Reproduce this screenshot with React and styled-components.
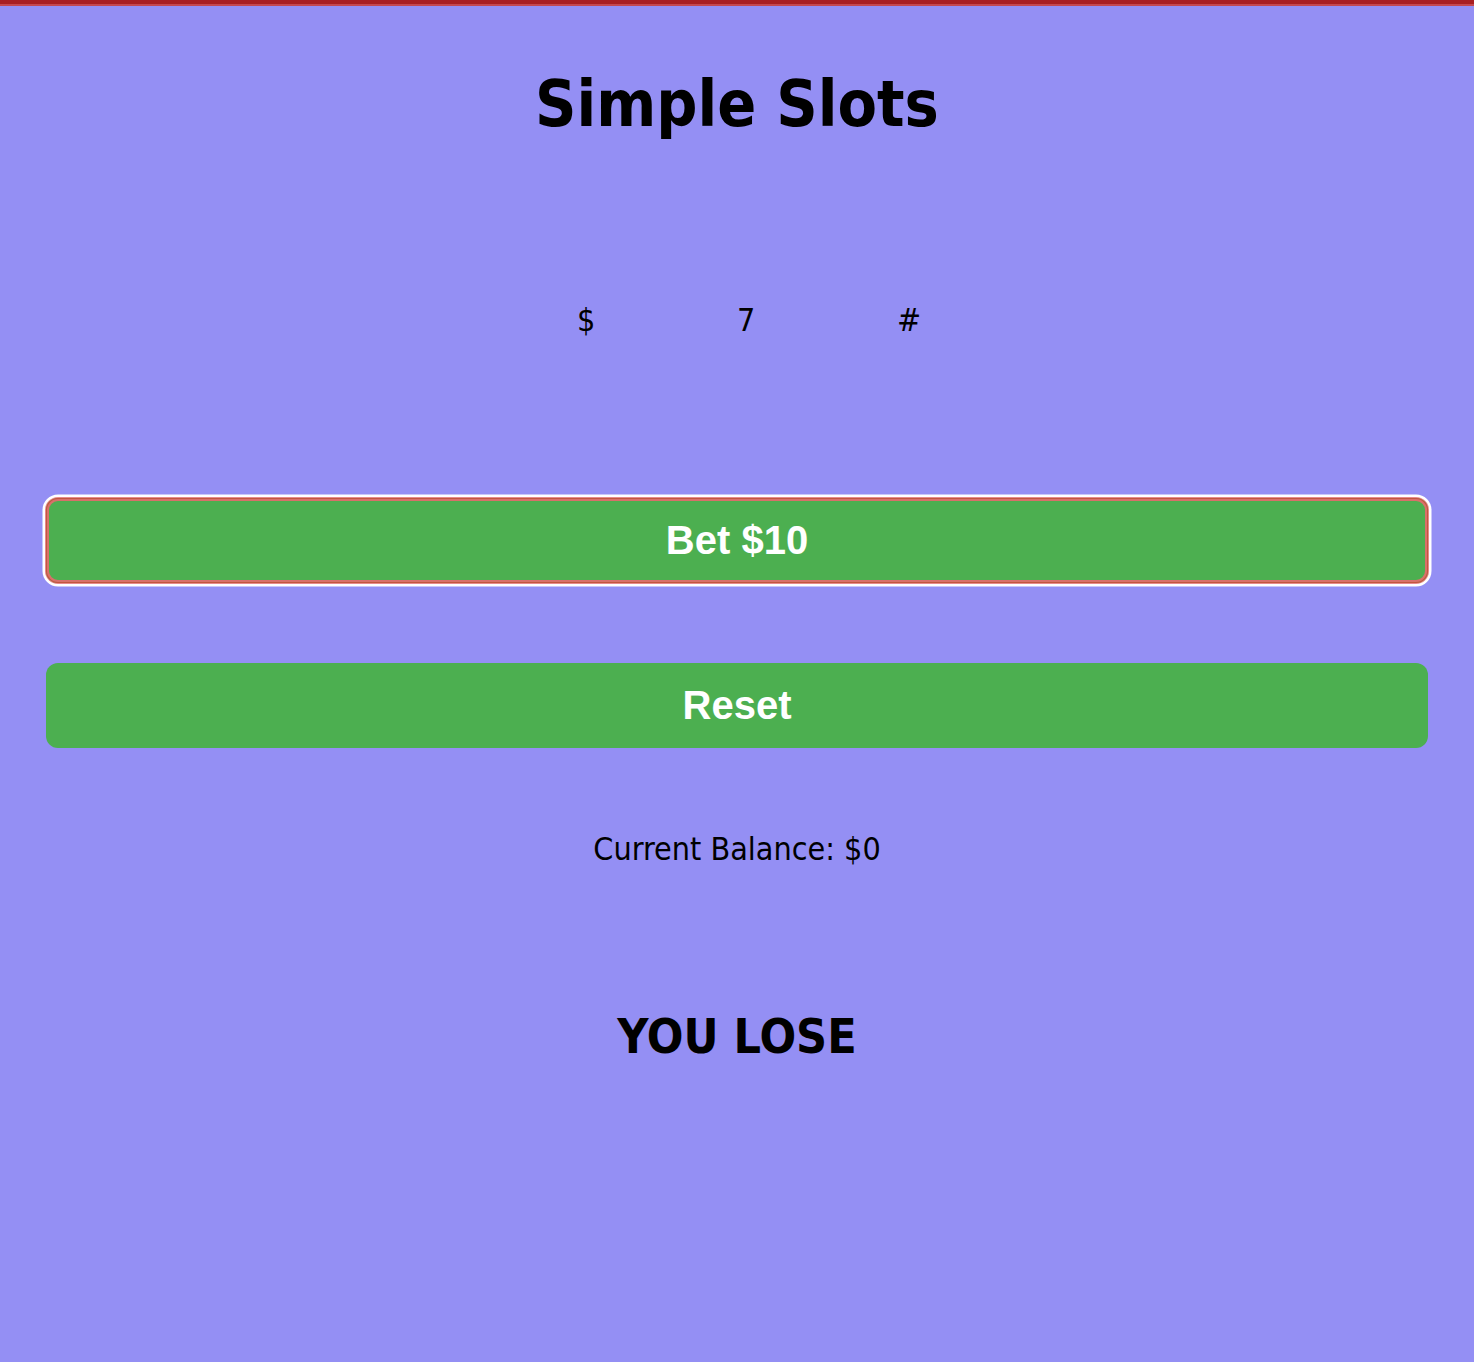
import React from 'react';
import styled, { createGlobalStyle } from 'styled-components';

const GlobalStyle = createGlobalStyle`
    html, body {
        margin: 0;
        padding: 0;
        background: #948ff4;
    }
    body {
        font-family: "DejaVu Sans Condensed", "DejaVu Sans", Tahoma, sans-serif;
        color: #000;
    }
`;

const Page = styled.div`
    min-height: 1362px;
    background: #948ff4;
`;

const TopBar = styled.div`
    height: 4px;
    background: #a81f22;
    border-bottom: 2px solid #c4484f;
`;

const Title = styled.h1`
    margin: 61px 0 0;
    font-size: 64px;
    line-height: 74px;
    font-weight: bold;
    text-align: center;
`;

const Reels = styled.div`
    display: grid;
    grid-template-columns: repeat(3, 160px);
    justify-content: center;
    margin-top: 161px;
    font-size: 32px;
    line-height: 37px;
`;

const Reel = styled.span`
    padding-left: 80px;
    text-align: left;
`;

const Controls = styled.div`
    display: flex;
    flex-direction: column;
    gap: 80px;
    padding: 0 46px;
    margin-top: 159px;
`;

const Button = styled.button`
    height: 85px;
    width: 100%;
    border: none;
    border-radius: 12px;
    background: #4caf50;
    color: #fff;
    font-family: "Liberation Sans", Arial, sans-serif;
    font-size: 40px;
    font-weight: bold;
    cursor: pointer;
    outline: none;
    box-shadow: ${({ $focused }) =>
        $focused
            ? 'inset 0 0 0 1px #c0573f, inset 0 0 0 3px #d9706a, 0 0 0 1px #e98a8a, 0 0 0 3.5px #fff'
            : 'none'};
`;

const Balance = styled.p`
    margin: 83px 0 0;
    font-size: 32px;
    line-height: 37px;
    text-align: center;
`;

const Result = styled.h2`
    margin: 140px 0 0;
    font-size: 48px;
    line-height: 56px;
    font-weight: bold;
    text-align: center;
`;

export default function App() {
    const reels = ['$', '7', '#'];

    return (
        <Page>
            <GlobalStyle />
            <TopBar />
            <Title>Simple Slots</Title>

            <Reels>
                {reels.map((symbol, i) => (
                    <Reel key={i}>{symbol}</Reel>
                ))}
            </Reels>

            <Controls>
                <Button $focused>Bet $10</Button>
                <Button>Reset</Button>
            </Controls>

            <Balance>Current Balance: $0</Balance>
            <Result>YOU LOSE</Result>
        </Page>
    );
}
